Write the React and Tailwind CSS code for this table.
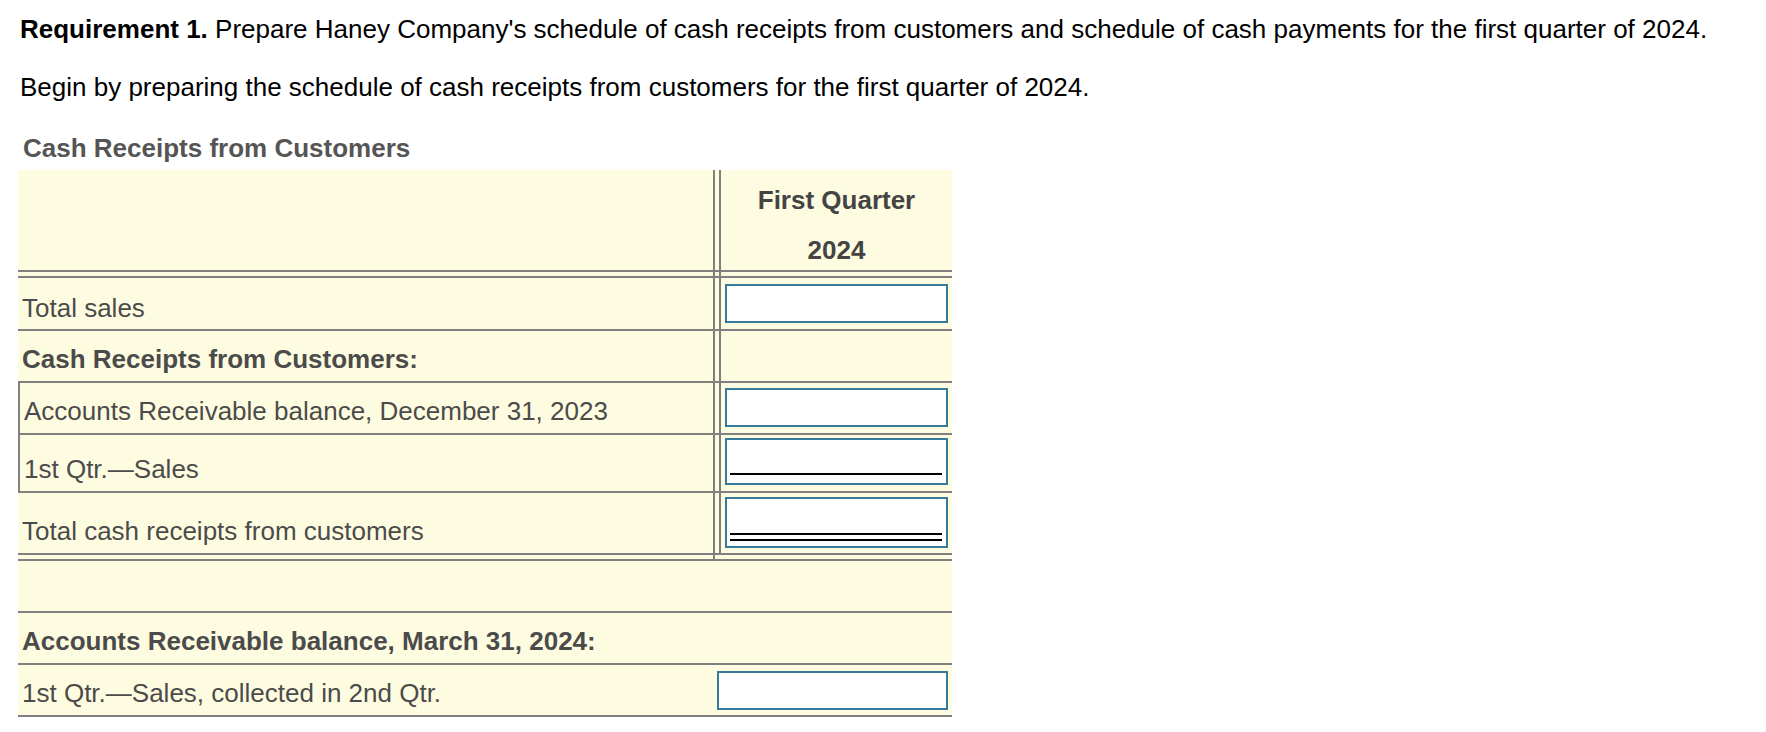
import React from "react";

const LINE = "border-[#808080]";

const AmountBox = ({ h, mt, under }) => (
  <div
    className={`flex flex-col justify-end border-2 border-[#367b9b] bg-white pl-[3px] pr-[4px] ${h} ${mt} ${
      under === "single" ? "pb-[8px]" : under === "double" ? "pb-[5px]" : ""
    }`}
  >
    {under === "single" && <div className="h-[2px] bg-black" />}
    {under === "double" && <div className="h-[8px] border-y-2 border-black" />}
  </div>
);

const SplitRow = ({ label, bold, boxed, h, pb, top, box, bottom = true }) => (
  <div className={`flex ${h} ${LINE} ${bottom ? "border-b-2" : ""} ${top ? "border-t-2" : ""}`}>
    <div
      className={`flex w-[697px] items-end border-r-2 ${LINE} pl-[4px] ${pb} ${boxed ? "border-l-2" : ""} ${
        bold ? "font-bold" : ""
      }`}
    >
      {label}
    </div>
    <div className="w-[4px]" />
    <div className={`flex-1 border-l-2 ${LINE} px-[4px]`}>{box}</div>
  </div>
);

const App = () => {
  return (
    <div className="min-h-screen bg-white pl-[18px] pt-[14px] font-['Liberation_Sans',Arial,sans-serif] text-[26px] leading-[30px] text-black">
      <p className="pl-[2px]">
        <span className="font-bold">Requirement 1.</span> Prepare Haney Company's schedule of cash receipts from
        customers and schedule of cash payments for the first quarter of 2024.
      </p>
      <p className="mt-[28px] pl-[2px]">
        Begin by preparing the schedule of cash receipts from customers for the first quarter of 2024.
      </p>
      <div className="mt-[31px] pl-[5px] font-bold text-[#555555]">Cash Receipts from Customers</div>

      <div className="mt-[7px] w-[934px] bg-[#fefce0] text-[#4b4b4b]">
        {/* header */}
        <div className={`flex h-[102px] border-b-2 ${LINE}`}>
          <div className={`w-[697px] border-r-2 ${LINE}`} />
          <div className="w-[4px]" />
          <div
            className={`flex flex-1 flex-col items-center border-l-2 ${LINE} pt-[5px] font-bold leading-[50px] text-[#444444]`}
          >
            <span>First Quarter</span>
            <span>2024</span>
          </div>
        </div>
        <div className="flex h-[4px]">
          <div className={`w-[697px] border-r-2 ${LINE}`} />
          <div className="w-[4px]" />
          <div className={`flex-1 border-l-2 ${LINE}`} />
        </div>

        <SplitRow
          label="Total sales"
          top
          h="h-[55px]"
          pb="pb-[6px]"
          box={<AmountBox h="h-[39px]" mt="mt-[6px]" />}
        />
        <SplitRow label="Cash Receipts from Customers:" bold h="h-[52px]" pb="pb-[7px]" />
        <SplitRow
          label="Accounts Receivable balance, December 31, 2023"
          boxed
          h="h-[52px]"
          pb="pb-[7px]"
          box={<AmountBox h="h-[39px]" mt="mt-[5px]" />}
        />
        <SplitRow
          label="1st Qtr.—Sales"
          boxed
          h="h-[58px]"
          pb="pb-[7px]"
          box={<AmountBox h="h-[47px]" mt="mt-[3px]" under="single" />}
        />
        <SplitRow
          label="Total cash receipts from customers"
          h="h-[62px]"
          pb="pb-[7px]"
          box={<AmountBox h="h-[51px]" mt="mt-[4px]" under="double" />}
        />
        <div className="flex h-[4px]">
          <div className={`w-[697px] border-r-2 ${LINE}`} />
        </div>

        {/* lower section */}
        <div className={`h-[54px] border-y-2 ${LINE}`} />
        <div className={`flex h-[52px] items-end border-b-2 ${LINE} pb-[7px] pl-[4px] font-bold`}>
          Accounts Receivable balance, March 31, 2024:
        </div>
        <div className={`flex h-[52px] border-b-2 ${LINE}`}>
          <div className="flex flex-1 items-end pb-[7px] pl-[4px]">1st Qtr.—Sales, collected in 2nd Qtr.</div>
          <div className="mr-[4px] w-[231px] pt-[6px]">
            <AmountBox h="h-[39px]" mt="" />
          </div>
        </div>
      </div>
    </div>
  );
};

export default App;
